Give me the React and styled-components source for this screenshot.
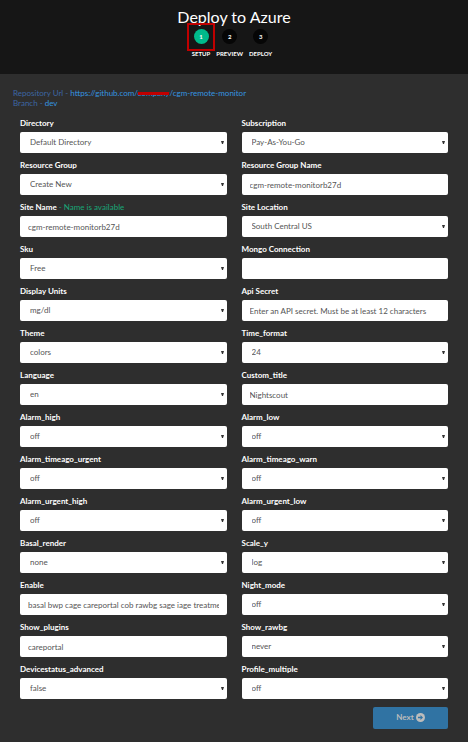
import React from "react";
import styled, { createGlobalStyle } from "styled-components";

const GlobalStyle = createGlobalStyle`
  *, *::before, *::after { box-sizing: border-box; }
  body {
    margin: 0;
    background: #2e2e2e;
    color: #fff;
    font: 8px/11px Lato, "Open Sans", sans-serif;
  }
`;

const Header = styled.header`
  display: flex;
  flex-direction: column;
  align-items: center;
  padding: 7px 0 17px;
  background: #161616;
`;

const Title = styled.h1`
  margin: 0;
  font-size: 16px;
  line-height: 19px;
  font-weight: 400;
`;

const Steps = styled.ol`
  display: flex;
  justify-content: center;
  gap: 6px;
  margin: 0;
  padding: 0 4px 0 0;
  list-style: none;
`;

const Step = styled.li`
  position: relative;
  display: flex;
  flex-direction: column;
  align-items: center;
  gap: 6px;
  padding-top: 3px;
  font-size: 6px;
  line-height: 7px;
  font-weight: 700;
`;

const StepNumber = styled.span`
  width: 15px;
  height: 15px;
  border-radius: 50%;
  background: ${(p) => (p.$active ? "#00ba8b" : "#060606")};
  line-height: 15px;
  text-align: center;
`;

const Highlight = styled.span`
  position: absolute;
  top: -3px;
  left: 50%;
  width: 28px;
  height: 28px;
  margin-left: -14px;
  border: 2px solid #c00000;
`;

const Source = styled.div`
  padding: 14px 13px 0;
  line-height: 10px;
  color: #3d66a3;
`;

const SourceLink = styled.a`
  color: #3595e0;
  text-decoration: none;
`;

const Redacted = styled.span`
  position: relative;
  &::after {
    content: "";
    position: absolute;
    left: 0;
    right: 0;
    top: 4px;
    height: 3px;
    background: #c00000;
  }
`;

const Form = styled.form`
  display: grid;
  grid-template-columns: 1fr 1fr;
  gap: 7px 15px;
  padding: 10px 20px 13px;
`;

const Field = styled.div`
  display: flex;
  flex-direction: column;
  gap: 3px;
  min-width: 0;
`;

const Label = styled.label`
  font-weight: 700;
`;

const Note = styled.span`
  font-weight: 400;
  color: #18a878;
`;

const Control = styled.input`
  width: 100%;
  height: 21px;
  padding: 0 8px;
  border: 0;
  border-radius: 2px;
  background: #fff;
  color: #555;
  font: inherit;
  &::placeholder { color: #555; opacity: 1; }
`;

const SelectWrap = styled.div`
  position: relative;
`;

const Select = styled(Control).attrs({ as: "select" })`
  display: block;
  padding: 0 10px;
  appearance: none;
`;

const Arrow = styled.svg`
  position: absolute;
  right: 3px;
  top: 9px;
  width: 3px;
  height: 4px;
  pointer-events: none;
`;

const Actions = styled.div`
  grid-column: 1 / -1;
  display: flex;
  justify-content: flex-end;
  margin-top: 1px;
`;

const NextButton = styled.button`
  display: flex;
  align-items: center;
  justify-content: center;
  gap: 2px;
  width: 75px;
  height: 22px;
  padding: 0 0 2px;
  border: 0;
  border-radius: 2px;
  background: #3073a3;
  color: #bcbcbc;
  font: inherit;
  font-weight: 700;
`;

const fields = [
  { label: "Directory", value: "Default Directory", select: true },
  { label: "Subscription", value: "Pay-As-You-Go", select: true },
  { label: "Resource Group", value: "Create New", select: true },
  { label: "Resource Group Name", value: "cgm-remote-monitorb27d" },
  { label: "Site Name", note: "Name is available", value: "cgm-remote-monitorb27d" },
  { label: "Site Location", value: "South Central US", select: true },
  { label: "Sku", value: "Free", select: true },
  { label: "Mongo Connection", value: "" },
  { label: "Display Units", value: "mg/dl", select: true },
  { label: "Api Secret", value: "", placeholder: "Enter an API secret. Must be at least 12 characters" },
  { label: "Theme", value: "colors", select: true },
  { label: "Time_format", value: "24", select: true },
  { label: "Language", value: "en", select: true },
  { label: "Custom_title", value: "Nightscout" },
  { label: "Alarm_high", value: "off", select: true },
  { label: "Alarm_low", value: "off", select: true },
  { label: "Alarm_timeago_urgent", value: "off", select: true },
  { label: "Alarm_timeago_warn", value: "off", select: true },
  { label: "Alarm_urgent_high", value: "off", select: true },
  { label: "Alarm_urgent_low", value: "off", select: true },
  { label: "Basal_render", value: "none", select: true },
  { label: "Scale_y", value: "log", select: true },
  { label: "Enable", value: "basal bwp cage careportal cob rawbg sage iage treatmentnotify" },
  { label: "Night_mode", value: "off", select: true },
  { label: "Show_plugins", value: "careportal" },
  { label: "Show_rawbg", value: "never", select: true },
  { label: "Devicestatus_advanced", value: "false", select: true },
  { label: "Profile_multiple", value: "off", select: true },
];

const steps = ["SETUP", "PREVIEW", "DEPLOY"];

function FormField({ label, note, value, select, placeholder }) {
  const id = label.toLowerCase().replace(/ /g, "-");
  return (
    <Field>
      <Label htmlFor={id}>
        {label}
        {note && <Note> - {note}</Note>}
      </Label>
      {select ? (
        <SelectWrap>
          <Select id={id} defaultValue={value}>
            <option>{value}</option>
          </Select>
          <Arrow viewBox="0 0 3 4" aria-hidden="true">
            <path d="M0 0h3L2 3H1z" fill="#333" />
          </Arrow>
        </SelectWrap>
      ) : (
        <Control id={id} type="text" defaultValue={value} placeholder={placeholder} />
      )}
    </Field>
  );
}

export default function App() {
  return (
    <>
      <GlobalStyle />
      <Header>
        <Title>Deploy to Azure</Title>
        <Steps>
          {steps.map((name, i) => (
            <Step key={name} aria-current={i === 0 ? "step" : undefined}>
              <StepNumber $active={i === 0}>{i + 1}</StepNumber>
              {name}
              {i === 0 && <Highlight />}
            </Step>
          ))}
        </Steps>
      </Header>
      <main>
        <Source>
          <div>
            Repository Url -{" "}
            <SourceLink href="#repository">
              https://github.com/<Redacted>company</Redacted>/cgm-remote-monitor
            </SourceLink>
          </div>
          <div>
            Branch - <SourceLink href="#branch">dev</SourceLink>
          </div>
        </Source>
        <Form onSubmit={(e) => e.preventDefault()}>
          {fields.map((f) => (
            <FormField key={f.label} {...f} />
          ))}
          <Actions>
            <NextButton type="submit" disabled>
              Next
              <svg width="9" height="9" viewBox="0 0 18 18" aria-hidden="true">
                <circle cx="9" cy="9" r="9" fill="#bcbcbc" />
                <path d="M4 7.5h5V4.2L14 9l-5 4.8v-3.3H4z" fill="#3073a3" />
              </svg>
            </NextButton>
          </Actions>
        </Form>
      </main>
    </>
  );
}
